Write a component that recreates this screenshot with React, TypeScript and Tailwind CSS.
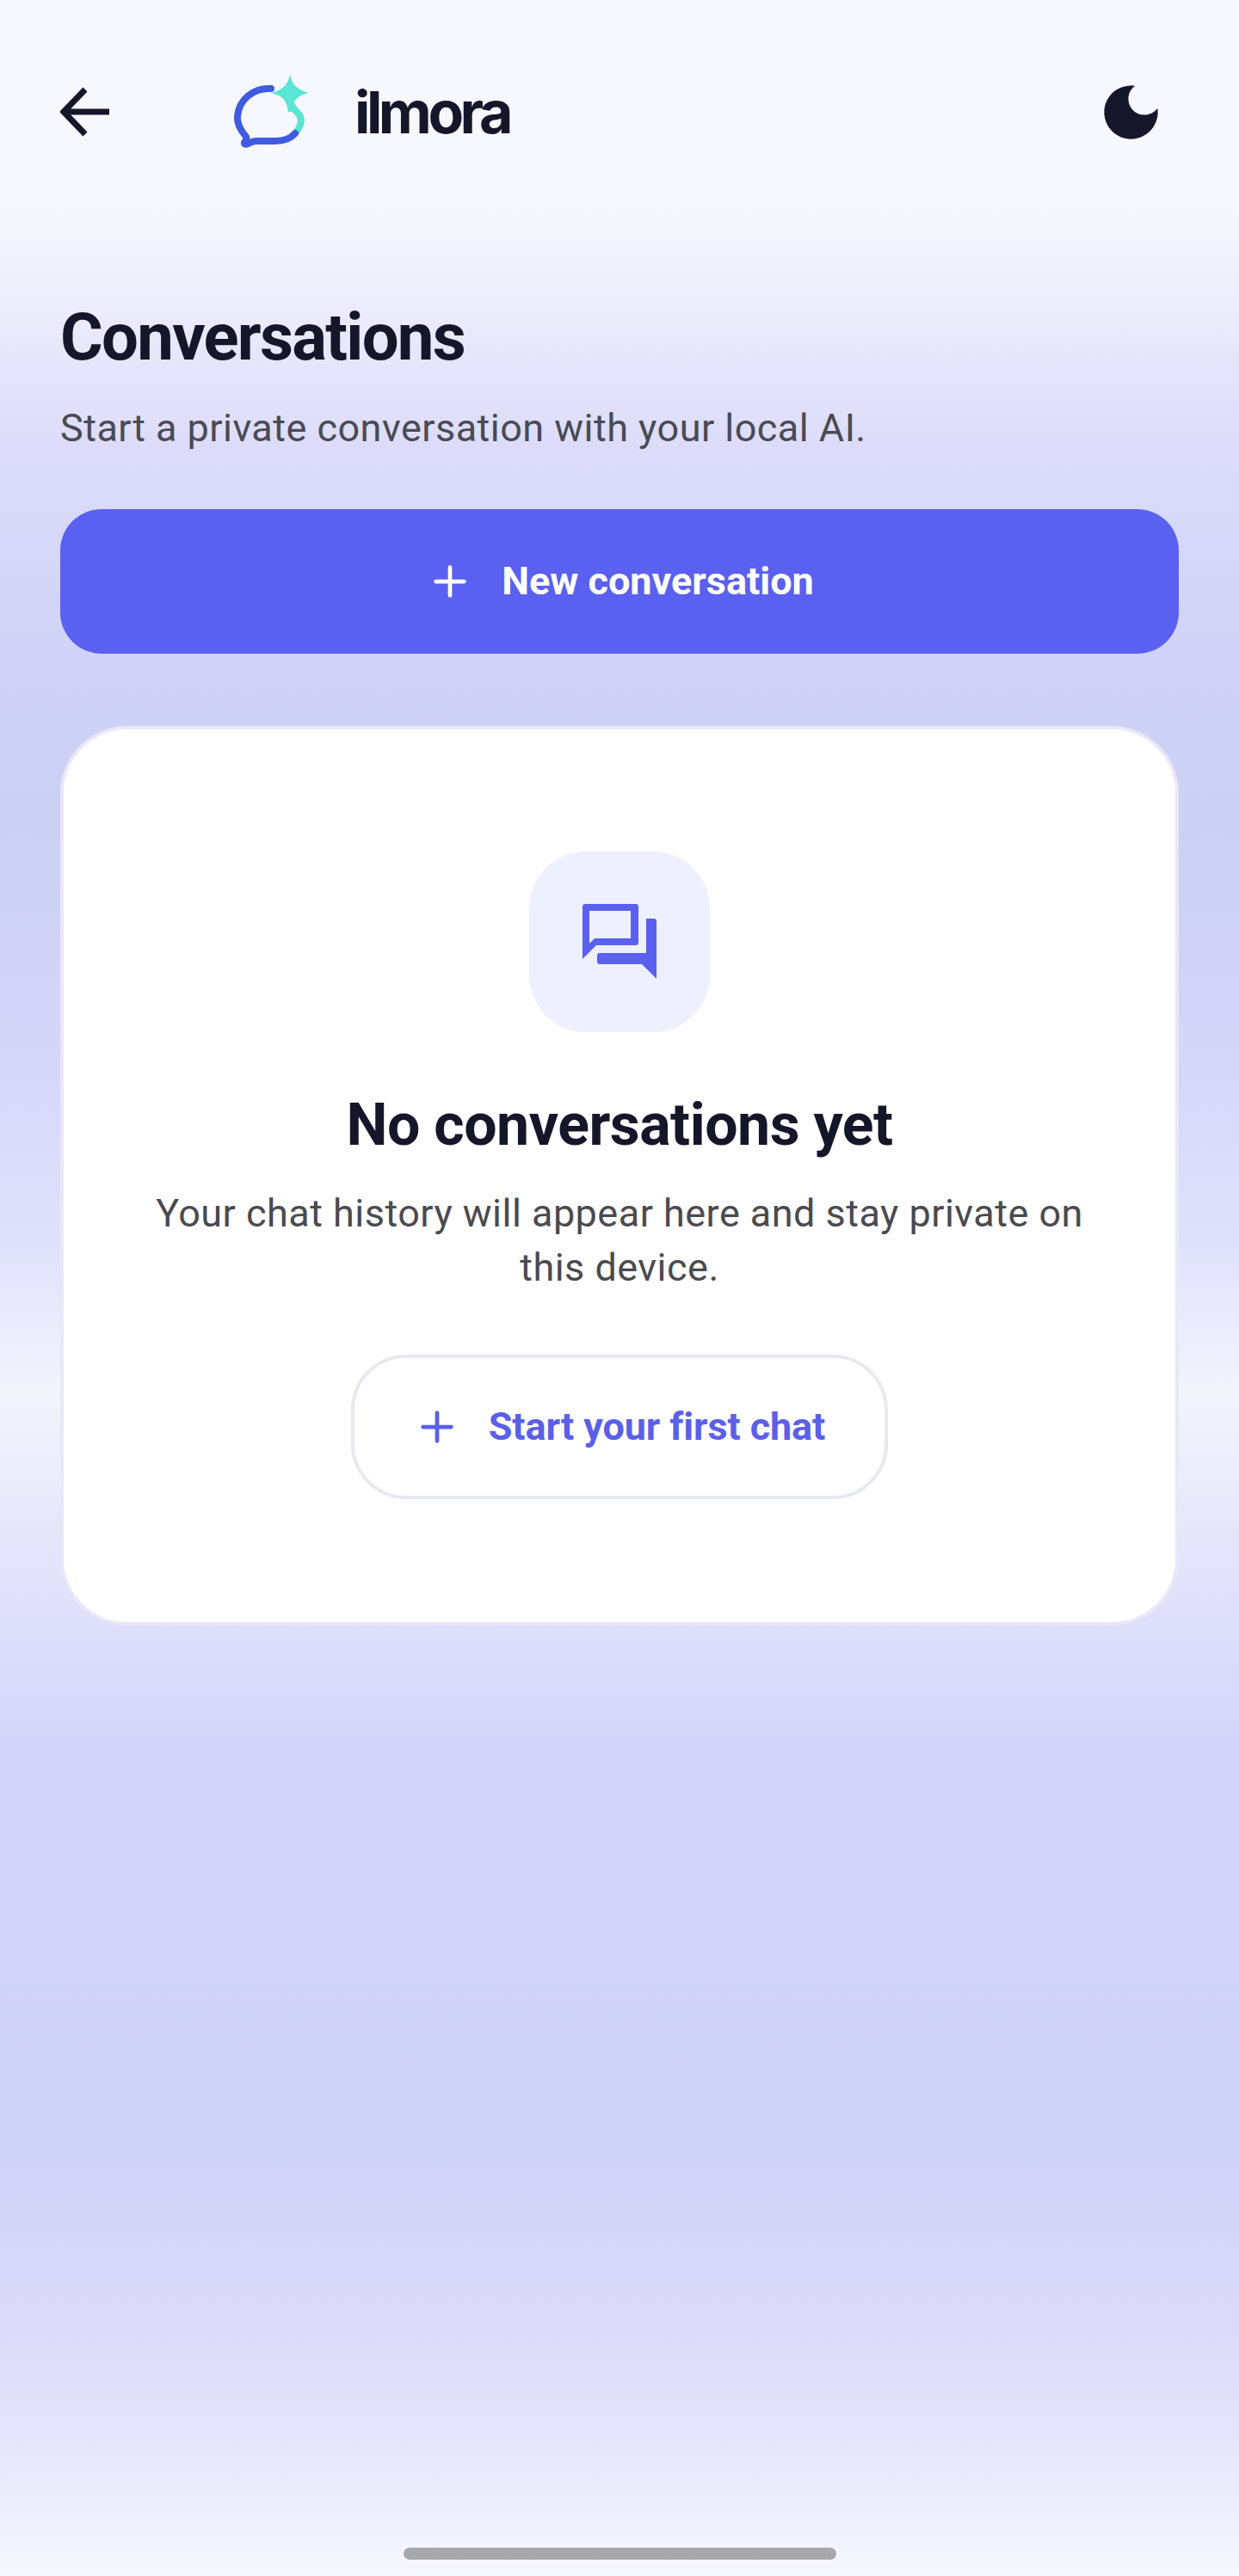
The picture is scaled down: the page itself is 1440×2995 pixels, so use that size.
function Plus({ className }: { className: string }) {
  return (
    <svg viewBox="0 0 36 36" className={className} fill="none" stroke="currentColor" strokeWidth="4.5" strokeLinecap="round">
      <path d="M18 2.5V33.5M2.5 18H33.5" />
    </svg>
  );
}

export default function App() {
  return (
    <div className="flex min-h-[2995px] w-[1440px] flex-col bg-[linear-gradient(180deg,#f7f8fe_0px,#f7f8fe_240px,#f0f0fc_320px,#dcdcfa_520px,#d0d3f7_760px,#ccd0f5_950px,#d4d6fa_1230px,#e0e2fb_1450px,#f4f4fd_1620px,#e8e8fb_1760px,#d3d5fa_2030px,#d0d3f9_2500px,#dad9f9_2700px,#e9eafb_2880px,#f7f8fe_2995px)] font-['Roboto',sans-serif]">
      <header className="flex h-[260px] items-center pl-[70px] pr-[84px]">
        <svg viewBox="0 0 60 60" className="h-[60px] w-[60px] text-[#15162a]" fill="none" stroke="currentColor" strokeWidth="7">
          <path d="M57 30H5M29 4L4 30L29 56" strokeLinejoin="miter" />
        </svg>
        <svg viewBox="0 0 100 100" className="ml-[140px] h-[100px] w-[100px]" fill="none" strokeWidth="8" strokeLinecap="round">
          <path d="M73 75C79 68 82 60 78 54C73 47 68 45 67 35" stroke="#5ae6d2" />
          <path d="M67 6C69 18 75 24 89 28C75 31 71 37 69 50L65 50C63 37 59 31 44 28C59 25 65 18 67 6Z" fill="#5ae6d2" />
          <path d="M45 23C25 22 8 35 6 55C5 64 10 72 16 79C18 83 13 85 14 87C17 90 21 84 27 84L50 84C60 84 68 81 73 75" stroke="#3f5ce0" />
        </svg>
        <span className="ml-[42px] font-['Inter',sans-serif] text-[68px] leading-none font-bold tracking-[-4.5px] text-[#15162a]">ilmora</span>
        <svg viewBox="0 0 24 24" className="ml-auto h-[83px] w-[83px] text-[#15162a]" fill="currentColor">
          <path d="M12 3c-4.97 0-9 4.03-9 9s4.03 9 9 9 9-4.03 9-9c0-.46-.04-.92-.1-1.36-.98 1.37-2.58 2.26-4.4 2.26-2.98 0-5.4-2.42-5.4-5.4 0-1.81.89-3.42 2.26-4.4-.44-.06-.9-.1-1.36-.1z" />
        </svg>
      </header>

      <main className="flex flex-col px-[70px]">
        <h1 className="mt-[90px] text-[76px] leading-[84px] font-bold tracking-[-1.7px] text-[#15162a]">Conversations</h1>
        <p className="mt-[34px] text-[45px] leading-[60px] tracking-[0.47px] text-[#4a4a55]">Start a private conversation with your local AI.</p>

        <button className="mt-[64px] flex h-[168px] items-center justify-center gap-[41px] rounded-[48px] bg-[#5a60ef] pl-[10px] text-[45px] font-bold text-white">
          <Plus className="h-[38px] w-[38px]" />
          <span>New conversation</span>
        </button>

        <section className="mt-[84px] flex h-[1046px] flex-col items-center rounded-[78px] border-4 border-[#e8e8f8] bg-white pt-[142px]">
          <div className="flex h-[210px] w-[210px] items-center justify-center rounded-[66px] bg-[#eef0fd]">
            <svg viewBox="0 0 90 90" className="h-[90px] w-[90px] text-[#5a60ef]" fill="currentColor" fillRule="evenodd">
              <path d="M2 4a3 3 0 0 1 3-3H64a3 3 0 0 1 3 3V46a3 3 0 0 1-3 3H18L2 65ZM10 9H58V41H16L10 47Z" />
              <path d="M76 18H85a3 3 0 0 1 3 3V88L71 71H22a3 3 0 0 1-3-3V61a3 3 0 0 1 3-3H76Z" />
            </svg>
          </div>
          <h2 className="mt-[69px] text-[68px] leading-[78px] font-bold tracking-[-0.5px] text-[#15162a]">No conversations yet</h2>
          <p className="mt-[32px] w-[1120px] text-center text-[45px] leading-[63px] tracking-[0.47px] text-[#4a4a4f]">Your chat history will appear here and stay private on this device.</p>
          <button className="mt-[70px] flex h-[168px] w-[624px] items-center justify-center gap-[41px] rounded-[64px] border-4 border-[#e8e8f0] bg-white pl-[8px] text-[45px] font-bold tracking-[-0.1px] text-[#5a60e8]">
            <Plus className="h-[38px] w-[38px]" />
            <span>Start your first chat</span>
          </button>
        </section>
      </main>

      <div className="mt-auto mb-[19px] h-[14px] w-[503px] self-center rounded-full bg-[#a8a8ac]" />
    </div>
  );
}
